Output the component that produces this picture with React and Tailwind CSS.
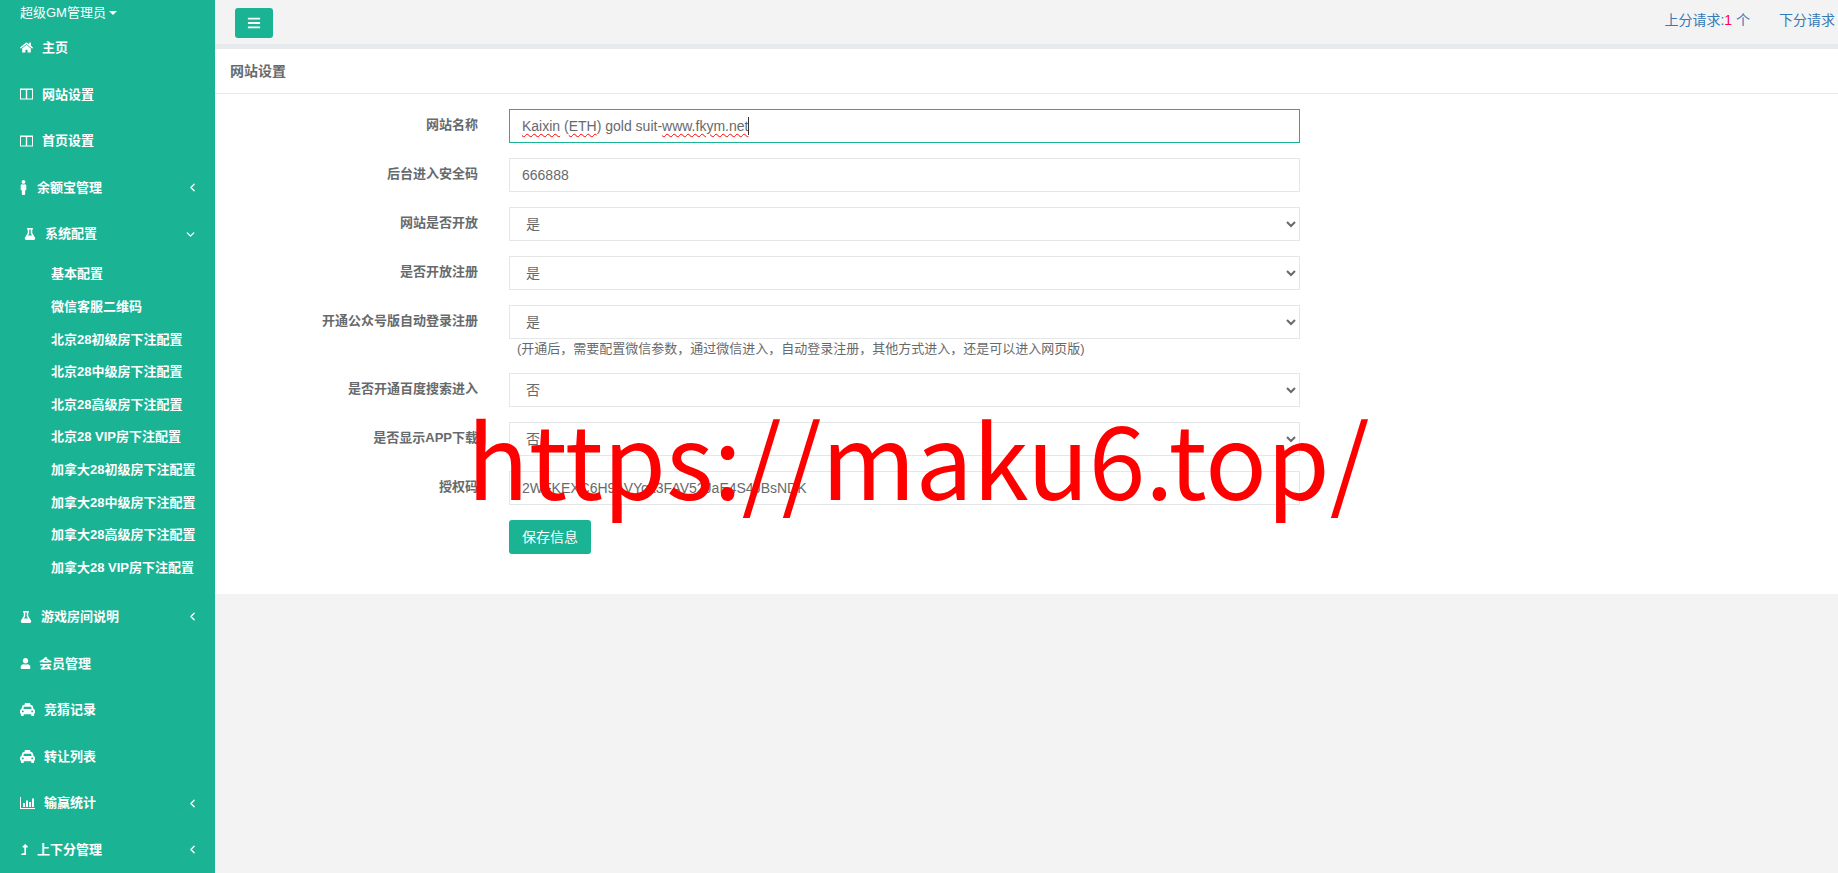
import { FaHome, FaMale, FaFlask, FaUser, FaTaxi, FaLevelUpAlt, FaBars } from "react-icons/fa";
import { ChevronLeft, ChevronDown } from "lucide-react";

const FONT = "[font-family:'Liberation_Sans','Noto_Sans_CJK_SC',sans-serif]";

// fa-columns from FA4: outline box split down the middle
function ColumnsIcon() {
  return (
    <svg width="13" height="12" viewBox="0 0 13 12" className="mr-[9px] shrink-0" fill="none" stroke="currentColor">
      <rect x="0.5" y="1.5" width="12" height="9.5" strokeWidth="1" />
      <rect x="0" y="0.5" width="13" height="1.5" fill="currentColor" stroke="none" />
      <path d="M6.5 1.5V11" strokeWidth="1.4" />
    </svg>
  );
}

// fa-bar-chart-o from FA4
function ChartIcon() {
  return (
    <svg width="15" height="12" viewBox="0 0 15 12" className="mr-[9px] shrink-0" fill="currentColor">
      <path d="M0 0h1v11h14v1H0z" />
      <rect x="3" y="6" width="2" height="4" />
      <rect x="6" y="3.5" width="2" height="6.5" />
      <rect x="9" y="5" width="2" height="5" />
      <rect x="12" y="1.5" width="2" height="8.5" />
    </svg>
  );
}

function NavItem({ icon, arrow, children, className = "" }) {
  return (
    <li className={`flex items-center h-[46.6px] pl-5 pr-[18px] text-[13px] font-bold text-white ${className}`}>
      {icon}
      <span className="whitespace-nowrap">{children}</span>
      {arrow === "left" && <ChevronLeft size={13} strokeWidth={2.5} className="ml-auto -mr-[2px]" />}
      {arrow === "down" && <ChevronDown size={13} strokeWidth={2.5} className="ml-auto" />}
    </li>
  );
}

const subItems = [
  "基本配置",
  "微信客服二维码",
  "北京28初级房下注配置",
  "北京28中级房下注配置",
  "北京28高级房下注配置",
  "北京28 VIP房下注配置",
  "加拿大28初级房下注配置",
  "加拿大28中级房下注配置",
  "加拿大28高级房下注配置",
  "加拿大28 VIP房下注配置",
];

function Sidebar() {
  return (
    <nav className="w-[215px] shrink-0 h-[873px] overflow-hidden bg-[#1ab394]">
      <div className="h-[24.5px] pl-5 flex items-center text-[13px] text-white whitespace-nowrap">
        超级GM管理员
        <span className="ml-[3px] mt-[1px] border-x-[4px] border-t-[4px] border-x-transparent border-t-white"></span>
      </div>
      <ul>
        <NavItem icon={<FaHome size={13} className="mr-[9px] shrink-0" />}>主页</NavItem>
        <NavItem icon={<ColumnsIcon />}>网站设置</NavItem>
        <NavItem icon={<ColumnsIcon />}>首页设置</NavItem>
        <NavItem arrow="left" icon={<FaMale size={15} className="mr-[6px] -ml-[4px] shrink-0" />}>余额宝管理</NavItem>
        <NavItem arrow="down" className="pl-6" icon={<FaFlask size={12} className="mr-[9px] shrink-0" />}>系统配置</NavItem>
        <ul className="pt-[0.4px] pb-[9.6px]">
          {subItems.map((item) => (
            <li key={item} className="h-[32.6px] pl-[51px] flex items-center text-[13px] font-bold text-white whitespace-nowrap">
              {item}
            </li>
          ))}
        </ul>
        <NavItem arrow="left" icon={<FaFlask size={12} className="mr-[9px] shrink-0" />}>游戏房间说明</NavItem>
        <NavItem icon={<FaUser size={11} className="mr-[8px] shrink-0" />}>会员管理</NavItem>
        <NavItem icon={<FaTaxi size={15} className="mr-[9px] shrink-0" />}>竞猜记录</NavItem>
        <NavItem icon={<FaTaxi size={15} className="mr-[9px] shrink-0" />}>转让列表</NavItem>
        <NavItem arrow="left" icon={<ChartIcon />}>输赢统计</NavItem>
        <NavItem arrow="left" icon={<FaLevelUpAlt size={11} className="mr-[7px] -ml-[1px] shrink-0" />}>上下分管理</NavItem>
      </ul>
    </nav>
  );
}

function Row({ label, children, hint }) {
  return (
    <div className="flex mb-[15px]">
      <label className="w-[263px] pt-[6px] text-right text-[13px] font-bold leading-[19px] text-[#676a6c] whitespace-nowrap">
        {label}
      </label>
      <div className="ml-[31px] w-[791px]">
        {children}
        {hint && <p className="pl-2 text-[13px] leading-[19px] text-[#676a6c]">{hint}</p>}
      </div>
    </div>
  );
}

function Select({ value }) {
  return (
    <select
      defaultValue={value}
      className="block w-full h-[34px] px-3 text-[14px] text-[#676a6c] bg-white border border-[#e5e6e7] outline-none"
    >
      <option>是</option>
      <option>否</option>
    </select>
  );
}

function TextInput({ value }) {
  return (
    <input
      defaultValue={value}
      className="block w-full h-[34px] px-3 text-[14px] text-[#676a6c] bg-white border border-[#e5e6e7] outline-none"
    />
  );
}

function Squiggle({ children }) {
  return <span className="underline decoration-wavy decoration-[#ff0000] decoration-1 underline-offset-2">{children}</span>;
}

export default function App() {
  return (
    <div className={`relative flex h-[873px] overflow-hidden bg-[#f3f3f4] ${FONT}`}>
      <Sidebar />
      <main className="flex-1 min-w-0">
        {/* top bar */}
        <div className="h-[49px] flex items-start justify-between border-b-[5px] border-[#e7eaec]">
          <button className="mt-2 ml-5 w-[38px] h-[30px] flex items-center justify-center rounded-[3px] bg-[#1ab394] text-white">
            <FaBars size={14} />
          </button>
          <div className="mt-[11px] mr-[3px] flex text-[14px] leading-[19px] text-[#337ab7] whitespace-nowrap">
            <span>上分请求:<span className="text-[#ff0055]">1</span> 个</span>
            <span className="ml-[29px]">下分请求</span>
          </div>
        </div>

        {/* panel */}
        <section className="bg-white h-[545px]">
          <h5 className="h-[45px] pl-[15px] flex items-center text-[14px] font-bold text-[#676a6c] border-b border-[#e7eaec]">
            网站设置
          </h5>
          <form className="pt-[15px]">
            <Row label="网站名称">
              <div className="h-[34px] px-3 flex items-center text-[14px] text-[#676a6c] border border-[#1ab394] whitespace-pre">
                <Squiggle>Kaixin</Squiggle> (<Squiggle>ETH</Squiggle>) gold suit-<Squiggle>www.fkym.net</Squiggle>
                <span className="w-px h-[18px] bg-[#333]"></span>
              </div>
            </Row>
            <Row label="后台进入安全码"><TextInput value="666888" /></Row>
            <Row label="网站是否开放"><Select value="是" /></Row>
            <Row label="是否开放注册"><Select value="是" /></Row>
            <Row label="开通公众号版自动登录注册" hint="(开通后，需要配置微信参数，通过微信进入，自动登录注册，其他方式进入，还是可以进入网页版)">
              <Select value="是" />
            </Row>
            <Row label="是否开通百度搜索进入"><Select value="否" /></Row>
            <Row label="是否显示APP下载"><Select value="否" /></Row>
            <Row label="授权码"><TextInput value="2WFKEXC6H9AVYqk3FAV52JaE4S4JBsNDK" /></Row>
            <div className="ml-[294px]">
              <button type="button" className="h-[34px] w-[82px] rounded-[3px] bg-[#1ab394] text-[14px] text-white">
                保存信息
              </button>
            </div>
          </form>
        </section>
      </main>

      {/* watermark */}
      <div className="absolute left-[467px] top-[405px] text-[101.6px] leading-none text-[#ff0000] whitespace-nowrap pointer-events-none [font-family:'Noto_Sans_CJK_SC',sans-serif]">
        https://maku6.top/
      </div>
    </div>
  );
}
